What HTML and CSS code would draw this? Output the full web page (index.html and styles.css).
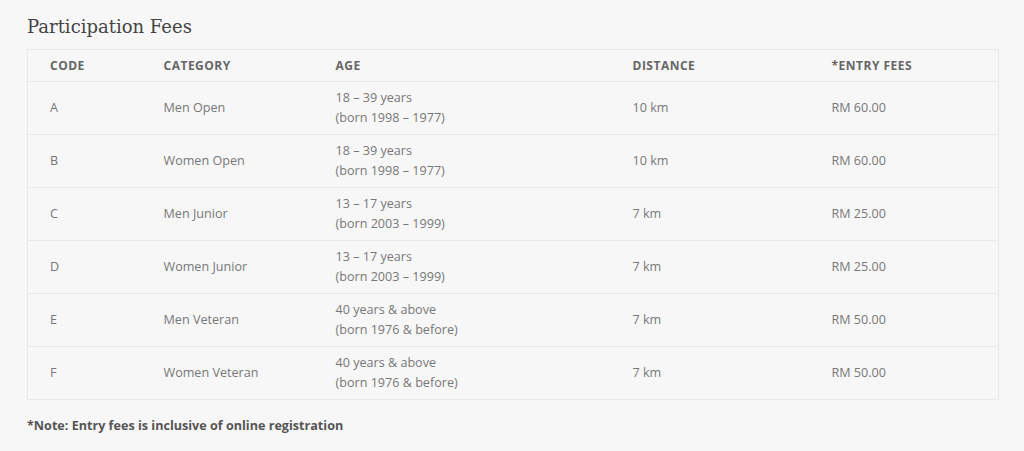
FILE: index.html
```html
<!DOCTYPE html>
<html>
<head>
<meta charset="utf-8">
<link rel="stylesheet" href="styles.css">
</head>
<body>
<div class="page">
  <h2 class="title">Participation Fees</h2>
  <table class="fees">
    <colgroup>
      <col class="c1"><col class="c2"><col class="c3"><col class="c4"><col class="c5">
    </colgroup>
    <thead>
      <tr><th>CODE</th><th>CATEGORY</th><th>AGE</th><th>DISTANCE</th><th>*ENTRY FEES</th></tr>
    </thead>
    <tbody>
      <tr><td>A</td><td>Men Open</td><td>18 – 39 years<br>(born 1998 – 1977)</td><td>10 km</td><td>RM 60.00</td></tr>
      <tr><td>B</td><td>Women Open</td><td>18 – 39 years<br>(born 1998 – 1977)</td><td>10 km</td><td>RM 60.00</td></tr>
      <tr><td>C</td><td>Men Junior</td><td>13 – 17 years<br>(born 2003 – 1999)</td><td>7 km</td><td>RM 25.00</td></tr>
      <tr><td>D</td><td>Women Junior</td><td>13 – 17 years<br>(born 2003 – 1999)</td><td>7 km</td><td>RM 25.00</td></tr>
      <tr><td>E</td><td>Men Veteran</td><td>40 years &amp; above<br>(born 1976 &amp; before)</td><td>7 km</td><td>RM 50.00</td></tr>
      <tr><td>F</td><td>Women Veteran</td><td>40 years &amp; above<br>(born 1976 &amp; before)</td><td>7 km</td><td>RM 50.00</td></tr>
    </tbody>
  </table>
  <p class="note">*Note: Entry fees is inclusive of online registration</p>
</div>
</body>
</html>
```
FILE: styles.css
```css
html, body {
  margin: 0;
  padding: 0;
  background: #f7f7f7;
}
body {
  font-family: "Open Sans", "Liberation Sans", sans-serif;
  color: #777;
  font-size: 12.6px;
}
.page {
  padding: 15px 26px 0 27px;
}
.title {
  margin: 0 0 10px 0;
  font-family: "DejaVu Serif", "Liberation Serif", serif;
  font-weight: normal;
  font-size: 18px;
  line-height: 24px;
  color: #444;
}
.fees {
  width: 971px;
  border-collapse: collapse;
  border: 1px solid #e9e9e9;
  table-layout: fixed;
}
.c1 { width: 114px; }
.c2 { width: 172px; }
.c3 { width: 297px; }
.c4 { width: 199px; }
.c5 { width: 189px; }
.fees th {
  text-align: left;
  font-weight: bold;
  font-size: 12px;
  letter-spacing: 0.5px;
  color: #666;
  height: 31px;
  padding: 0 0 0 22px;
  border-bottom: 1px solid #e9e9e9;
}
.fees td {
  height: 52px;
  padding: 0 0 0 22px;
  line-height: 20px;
  border-bottom: 1px solid #e9e9e9;
  vertical-align: middle;
}
.note {
  margin: 17px 0 0 0;
  font-weight: bold;
  color: #555;
  font-size: 12.6px;
}
```
